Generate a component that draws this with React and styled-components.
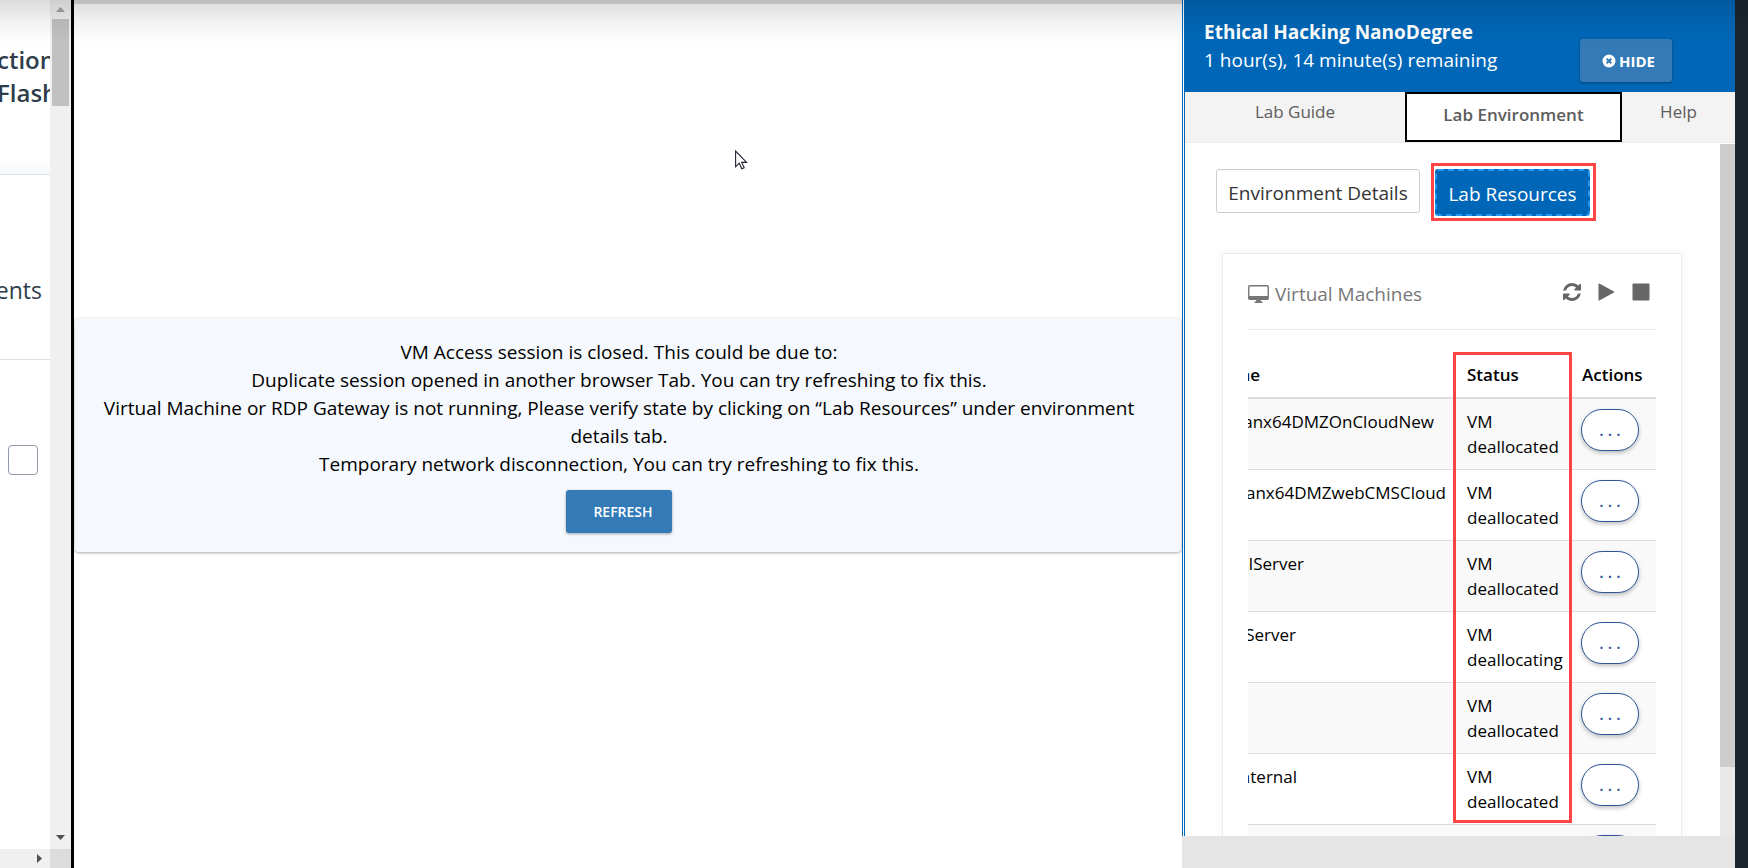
import React from 'react';
import styled, { createGlobalStyle } from 'styled-components';

const Global = createGlobalStyle`
  *, *::before, *::after { box-sizing: border-box; }
  body { margin: 0; background: #fff; font-family: "Open Sans", "Noto Sans", sans-serif; }
  button { font-family: inherit; cursor: pointer; }
  p, h1, h2 { margin: 0; }
`;

const Page = styled.div`
  position: relative;
  display: flex;
  height: 100vh;
  overflow: hidden;
`;

const TopShade = styled.div`
  position: absolute;
  inset: 0 0 auto 0;
  height: 44px;
  background: linear-gradient(rgba(0, 0, 0, 0.14), rgba(0, 0, 0, 0.05) 50%, rgba(0, 0, 0, 0));
  pointer-events: none;
`;

/* Course sidebar */

const Sidebar = styled.aside`
  flex: none;
  display: grid;
  grid-template-columns: 50px 21px;
  grid-template-rows: 1fr 19px;
  width: 74px;
  border-right: 3px solid #000;
`;

const SidebarContent = styled.div`
  overflow: hidden;
  white-space: nowrap;
  color: #2e3d49;
`;

const LessonTitle = styled.h1`
  height: 175px;
  margin-left: -3px;
  padding-top: 43px;
  border-bottom: 1px solid #dbe2e8;
  background: linear-gradient(#fff 160px, #f5f6f7);
  font-size: 24px;
  line-height: 33px;
  font-weight: 600;
`;

const LessonSection = styled.section`
  display: flex;
  align-items: center;
  justify-content: flex-end;
  height: 185px;
  padding: 46px 8px 0 0;
  border-bottom: 1px solid #dbdfe3;
  font-size: 23px;
  line-height: 30px;
`;

const LessonCheck = styled.input`
  appearance: none;
  display: block;
  width: 30px;
  height: 30px;
  margin: 85px 0 0 8px;
  border: 1px solid #8f9ba8;
  border-radius: 4px;
  background: #fff;
`;

const ScrollTrack = styled.div`
  display: flex;
  flex-direction: column;
  align-items: center;
  justify-content: space-between;
  padding: 7px 0 9px;
  background: #f0f0f0;
`;

const ScrollThumb = styled.div`
  width: 17px;
  height: 87px;
  margin: 7px 0 auto;
  background: #c1c1c1;
`;

const ScrollRow = styled.div`
  display: flex;
  align-items: center;
  justify-content: flex-end;
  padding-right: 8px;
  background: #f0f0f0;
`;

const ScrollCorner = styled.div`
  background: #dcdcdc;
`;

const Arrow = styled.svg`
  display: block;
  fill: ${(p) => (p.$dim ? '#a3a3a3' : '#505050')};
`;

/* Session viewer */

const Viewer = styled.main`
  flex: 1;
  min-width: 0;
  position: relative;
  display: flex;
  flex-direction: column;
  justify-content: center;
  padding: 0 1px 2px;
  border-top: 4px solid #dcdcdc;
`;

const Notice = styled.section`
  display: flex;
  flex-direction: column;
  align-items: center;
  padding: 20px 42px 19px 24px;
  border-radius: 4px;
  background: #f5f8fd;
  box-shadow: 0 1px 3px rgba(0, 0, 0, 0.35);
  color: #000;
  text-align: center;
  font-size: 19px;
  line-height: 28px;
`;

const PrimaryButton = styled.button`
  display: flex;
  align-items: center;
  justify-content: center;
  gap: 3px;
  height: 43px;
  padding: ${(p) => (p.$indent ? '0 19px 0 27px' : '0 17px 0 22px')};
  border: 0;
  border-radius: 3px;
  background: #337ab7;
  box-shadow: 0 1px 3px rgba(0, 0, 0, 0.35);
  color: #fff;
  font-size: ${(p) => (p.$indent ? 14 : 15)}px;
  font-weight: ${(p) => (p.$indent ? 600 : 700)};
`;

const RefreshSpace = styled.div`
  padding-top: 12px;
`;

const Pointer = styled.svg`
  position: absolute;
  left: 661px;
  top: 146px;
`;

/* Lab panel */

const PanelColumn = styled.aside`
  flex: none;
  display: flex;
  flex-direction: column;
  width: 553px;
  background: #e5e5e5;
  padding-bottom: 32px;
`;

const Panel = styled.div`
  flex: 1;
  min-height: 0;
  display: flex;
  flex-direction: column;
  border-left: 3px double #0067b8;
  background: #fff;
`;

const PanelHeader = styled.header`
  display: flex;
  justify-content: space-between;
  height: 92px;
  padding: 18px 63px 10px 19px;
  background: #0067b8;
  color: #fff;
  font-size: 19px;
  line-height: 28px;
`;

const PanelTitle = styled.h2`
  font-size: 19px;
  line-height: 28px;
  font-weight: 700;
`;

const HideSpace = styled.div`
  align-self: flex-end;
`;

const Tabs = styled.nav`
  display: grid;
  grid-template-columns: 220px 217px 1fr;
  height: 51px;
  border-bottom: 1px solid #ebebeb;
  background: #f3f3f3;
`;

const Tab = styled.button`
  padding: ${(p) => (p.$active ? '0 0 6px' : '0 0 12px')};
  border: ${(p) => (p.$active ? '2px solid #000' : '0')};
  background: ${(p) => (p.$active ? '#fff' : 'transparent')};
  color: #5c5c5c;
  font-size: 17px;
  font-weight: ${(p) => (p.$active ? 600 : 400)};
`;

const PanelBody = styled.div`
  flex: 1;
  min-height: 0;
  display: flex;
  padding-top: 1px;
`;

const PanelContent = styled.div`
  flex: 1;
  min-width: 0;
  overflow: hidden;
  padding: 19px 38px 0 31px;
`;

const PanelTrack = styled.div`
  flex: none;
  width: 15px;
  background: #e9e9e9;
`;

const PanelThumb = styled.div`
  height: 90%;
  background: #cdcdcd;
`;

const Switcher = styled.div`
  display: flex;
  gap: 11px;
  height: 58px;
`;

const DetailsButton = styled.button`
  width: 204px;
  height: 44px;
  margin-top: 6px;
  padding: 4px 0 0;
  border: 1px solid #ccc;
  border-radius: 3px;
  background: #fff;
  color: #333;
  font-size: 19px;
`;

const Marker = styled.div`
  padding: 3px 3px 2px 1px;
  border: 3px solid #ff4444;
`;

const ResourcesButton = styled.button`
  display: block;
  width: 155px;
  height: 47px;
  padding: 3px 0 0;
  border: 2px dashed #2196f3;
  border-radius: 3px;
  background: #0067b8;
  color: #fff;
  font-size: 19px;
`;

const Card = styled.section`
  position: relative;
  margin: 32px 0 0 6px;
  padding: 0 25px;
  border: 1px solid #e7ebee;
  border-radius: 3px;
  box-shadow: 0 0 10px rgba(0, 0, 0, 0.06);
`;

const CardHead = styled.div`
  display: flex;
  align-items: center;
  height: 76px;
  padding-right: 6px;
  border-bottom: 1px solid #eee;
  color: #777;
`;

const CardTitle = styled.h2`
  flex: 1;
  display: flex;
  align-items: center;
  gap: 6px;
  padding-top: 5px;
  font-size: 19px;
  line-height: 28px;
  font-weight: 400;
`;

const IconButton = styled.button`
  padding: 0;
  margin-left: 17px;
  border: 0;
  background: none;
  color: #666;
  svg { display: block; }
`;

const VmTable = styled.table`
  width: 100%;
  margin-top: 22px;
  border-collapse: collapse;
  table-layout: fixed;
  color: #000;
  font-size: 17px;
  line-height: 25px;
  text-align: left;

  th { height: 46px; padding: 9px 6px 10px; font-weight: 600; border-bottom: 2px solid #ddd; }
  td { height: 71px; padding: 10px 6px 8px; vertical-align: top; border-bottom: 1px solid #ddd; }
  th:first-child, td:first-child { padding-left: 0; padding-right: 0; }
  td:last-child { padding: 10px 0 0 5px; }
  tbody tr:nth-child(odd) { background: #f9f9f9; }
`;

const ScrolledText = styled.span`
  display: flex;
  justify-content: flex-end;
  width: ${(p) => p.$visible}px;
  overflow: hidden;
  white-space: nowrap;
`;

const MoreButton = styled.button`
  display: block;
  width: 58px;
  height: 42px;
  padding: 0;
  border: 1px solid #2f5597;
  border-radius: 21px;
  background: #fff;
  box-shadow: 0 2px 4px rgba(0, 0, 0, 0.25);
  color: #2f5597;
  font-size: 16px;
  font-weight: 600;
`;

const StatusFrame = styled.div`
  position: absolute;
  left: 230px;
  top: 98px;
  width: 119px;
  height: 471px;
  border: 3px solid #ff4444;
  pointer-events: none;
`;

const Edge = styled.div`
  flex: none;
  width: 13px;
  background: #1c262f;
`;

const machines = [
  { name: 'anx64DMZOnCloudNew', visible: 186, status: 'VM deallocated' },
  { name: 'anx64DMZwebCMSCloud', visible: 198, status: 'VM deallocated' },
  { name: 'ZIServer', visible: 56, status: 'VM deallocated' },
  { name: 'Server', visible: 48, status: 'VM deallocating' },
  { name: '', visible: 0, status: 'VM deallocated' },
  { name: 'nternal', visible: 49, status: 'VM deallocated' },
  { name: '', visible: 0, status: '' },
];

const MonitorIcon = () => (
  <svg width="21" height="18" viewBox="0 0 21 18" fill="none" aria-hidden="true">
    <rect x="0.750" y="0.750" width="19.500" height="13.500" rx="1" stroke="currentColor" strokeWidth="1.400" />
    <path d="M1 11h19v3.500H1zM8.500 14.500h4l.6 2h1.400V18h-8v-1.500h1.400z" fill="currentColor" />
  </svg>
);

const RefreshIcon = () => (
  <svg width="18" height="18" viewBox="0 0 1536 1536" fill="currentColor" aria-hidden="true">
    <path d="M1511 928q0 5-1 7-64 268-268 434.500T764 1536q-146 0-282.500-55T238 1324l-129 129q-19 19-45 19t-45-19-19-45V960q0-26 19-45t45-19h448q26 0 45 19t19 45-19 45l-137 137q71 66 161 102t187 36q134 0 250-65t186-179q11-17 53-117 8-23 30-23h192q13 0 22.500 9.500t9.500 22.500zm25-800v448q0 26-19 45t-45 19h-448q-26 0-45-19t-19-45 19-45l138-138Q969 256 768 256q-134 0-250 65T332 500q-11 17-53 117-8 23-30 23H50q-13 0-22.500-9.500T18 608v-7q65-268 270-434.500T768 0q146 0 284 55.500T1297 212l130-129q19-19 45-19t45 19 19 45z" />
  </svg>
);

const PlayIcon = () => (
  <svg width="17" height="18" viewBox="0 0 17 18" fill="currentColor" aria-hidden="true">
    <path d="M0.500 1v16q0 .8.800.5L16 9.500q.6-.5 0-1L1.300.5Q.5.200.500 1z" />
  </svg>
);

const StopIcon = () => (
  <svg width="18" height="18" viewBox="0 0 18 18" fill="currentColor" aria-hidden="true">
    <rect x="0.500" y="0.500" width="17" height="17" rx="1" />
  </svg>
);

const CloseIcon = () => (
  <svg width="14" height="14" viewBox="0 0 14 14" aria-hidden="true">
    <circle cx="7" cy="7" r="6.500" fill="#fff" />
    <path d="M4.700 4.700l4.600 4.600M9.300 4.700L4.700 9.300" stroke="#337ab7" strokeWidth="2" />
  </svg>
);

export default function App() {
  return (
    <Page>
      <Global />
      <Sidebar>
        <SidebarContent>
          <LessonTitle>ction<br />Flash</LessonTitle>
          <LessonSection>ents</LessonSection>
          <LessonCheck type="checkbox" aria-label="Task complete" />
        </SidebarContent>
        <ScrollTrack>
          <Arrow $dim width="9" height="5" viewBox="0 0 9 5"><path d="M0 5L4.500 0L9 5z" /></Arrow>
          <ScrollThumb />
          <Arrow width="9" height="5" viewBox="0 0 9 5"><path d="M0 0h9L4.500 5z" /></Arrow>
        </ScrollTrack>
        <ScrollRow>
          <Arrow width="5" height="9" viewBox="0 0 5 9"><path d="M0 0v9L5 4.500z" /></Arrow>
        </ScrollRow>
        <ScrollCorner />
      </Sidebar>

      <Viewer>
        <Notice>
          <p>VM Access session is closed. This could be due to:</p>
          <p>Duplicate session opened in another browser Tab. You can try refreshing to fix this.</p>
          <p>Virtual Machine or RDP Gateway is not running, Please verify state by clicking on “Lab Resources” under environment details tab.</p>
          <p>Temporary network disconnection, You can try refreshing to fix this.</p>
          <RefreshSpace><PrimaryButton $indent>REFRESH</PrimaryButton></RefreshSpace>
        </Notice>
        <Pointer width="13" height="20" viewBox="0 0 13 20" aria-hidden="true">
          <path d="M.6 1v15.600l3.600-3.400 2.600 5.600 2.400-1.100-2.500-5.300h4.900z" fill="#fff" stroke="#223" strokeWidth="1.100" />
        </Pointer>
      </Viewer>

      <PanelColumn>
        <Panel>
          <PanelHeader>
            <div>
              <PanelTitle>Ethical Hacking NanoDegree</PanelTitle>
              <p>1 hour(s), 14 minute(s) remaining</p>
            </div>
            <HideSpace><PrimaryButton><CloseIcon />HIDE</PrimaryButton></HideSpace>
          </PanelHeader>
          <Tabs>
            <Tab>Lab Guide</Tab>
            <Tab $active>Lab Environment</Tab>
            <Tab>Help</Tab>
          </Tabs>
          <PanelBody>
            <PanelContent>
              <Switcher>
                <DetailsButton>Environment Details</DetailsButton>
                <Marker><ResourcesButton>Lab Resources</ResourcesButton></Marker>
              </Switcher>
              <Card>
                <CardHead>
                  <CardTitle><MonitorIcon />Virtual Machines</CardTitle>
                  <IconButton aria-label="Refresh"><RefreshIcon /></IconButton>
                  <IconButton aria-label="Start all"><PlayIcon /></IconButton>
                  <IconButton aria-label="Stop all"><StopIcon /></IconButton>
                </CardHead>
                <VmTable>
                  <colgroup><col /><col width="115" /><col width="80" /></colgroup>
                  <thead>
                    <tr>
                      <th><ScrolledText $visible={12}>ne</ScrolledText></th>
                      <th>Status</th>
                      <th>Actions</th>
                    </tr>
                  </thead>
                  <tbody>
                    {machines.map((m, i) => (
                      <tr key={i}>
                        <td><ScrolledText $visible={m.visible}>{m.name}</ScrolledText></td>
                        <td>{m.status}</td>
                        <td><MoreButton aria-label="More actions">. . .</MoreButton></td>
                      </tr>
                    ))}
                  </tbody>
                </VmTable>
                <StatusFrame />
              </Card>
            </PanelContent>
            <PanelTrack><PanelThumb /></PanelTrack>
          </PanelBody>
        </Panel>
      </PanelColumn>
      <Edge />
      <TopShade />
    </Page>
  );
}
